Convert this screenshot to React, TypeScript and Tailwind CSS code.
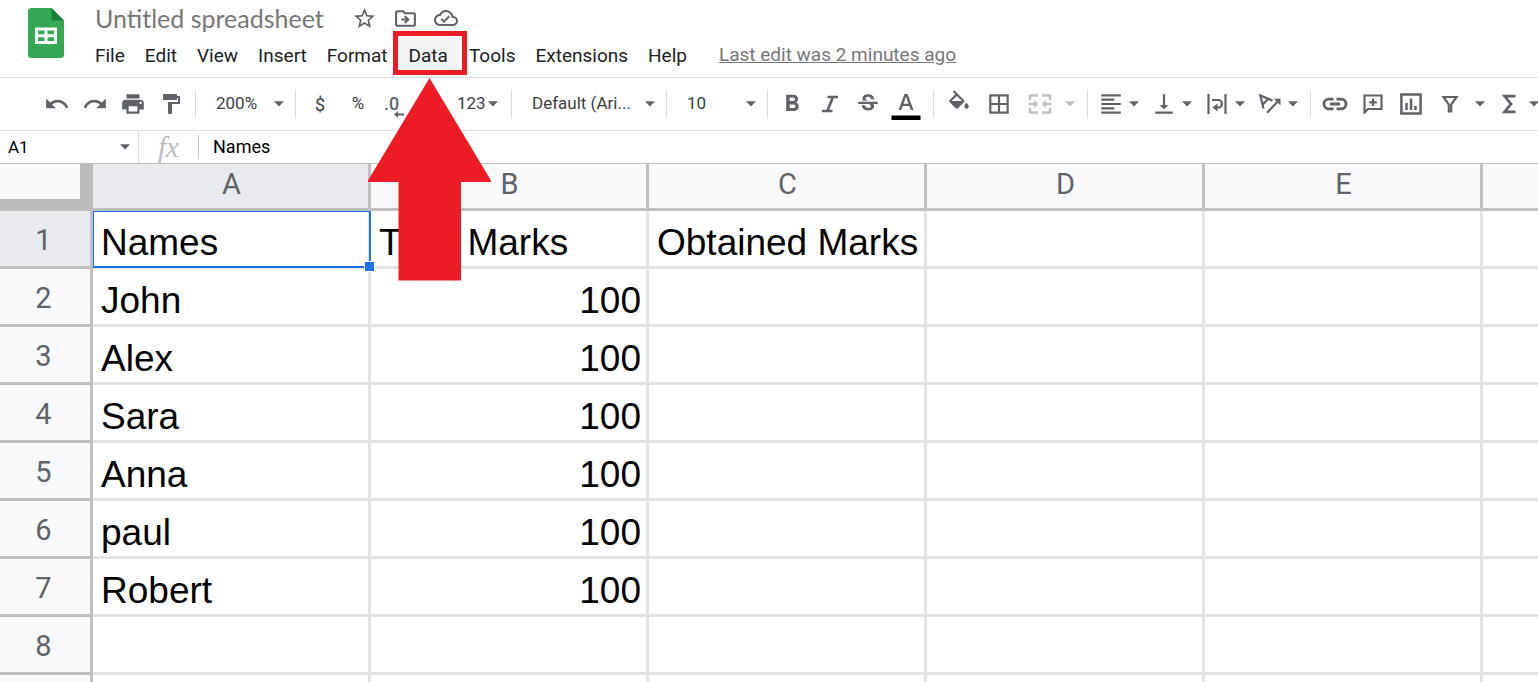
import React, { type ReactNode } from "react";
import {
  MdBorderAll,
  MdFormatAlignLeft,
  MdFormatBold,
  MdFormatPaint,
  MdOutlineCloudDone,
  MdOutlineDriveFileMove,
  MdPrint,
  MdRedo,
  MdStarBorder,
  MdStrikethroughS,
  MdUndo,
  MdVerticalAlignBottom,
} from "react-icons/md";

const menus = ["File", "Edit", "View", "Insert", "Format", "Data", "Tools", "Extensions", "Help"];
const columns = ["A", "B", "C", "D", "E", "F"];
const rows: string[][] = [
  ["Names", "Total Marks", "Obtained Marks"],
  ["John", "100"],
  ["Alex", "100"],
  ["Sara", "100"],
  ["Anna", "100"],
  ["paul", "100"],
  ["Robert", "100"],
  [],
];

function Caret({ className = "" }: { className?: string }) {
  return (
    <svg viewBox="0 0 10 6" className={`h-[6px] w-[10px] shrink-0 ${className}`} fill="currentColor" aria-hidden="true">
      <path d="M0 .3h10L5 5.600z" />
    </svg>
  );
}

function Logo() {
  return (
    <svg viewBox="0 0 36 50" className="h-[50px] w-[36px]" aria-hidden="true">
      <path d="M3.500 0H23.500L36 12.500V46.500a3.500 3.500 0 0 1-3.500 3.500h-29A3.500 3.500 0 0 1 0 46.500v-43A3.500 3.500 0 0 1 3.500 0z" fill="#34a853" />
      <path d="M23.500 0 36 12.500H23.500z" fill="#188038" />
      <path d="M7 19.500h22v16.500H7zM10 22.500v3.700h6.500v-3.700zM19.500 22.500v3.700H26v-3.700zM10 29.300V33h6.500v-3.700zM19.500 29.300V33H26v-3.700z" fill="#fff" fillRule="evenodd" />
    </svg>
  );
}

function Tool({ label, className = "w-[38px]", children }: { label: string; className?: string; children: ReactNode }) {
  return (
    <button type="button" aria-label={label} className={`flex h-9 shrink-0 items-center justify-center ${className}`}>
      {children}
    </button>
  );
}

function DropTool({ label, children }: { label: string; children: ReactNode }) {
  return (
    <button type="button" aria-label={label} className="flex h-9 w-[53px] shrink-0 items-center">
      <span className="flex w-9 justify-center">{children}</span>
      <Caret />
    </button>
  );
}

function Separator() {
  return <div className="mx-[5px] h-7 w-px shrink-0 bg-[#dadce0]" />;
}

function Picker({ label, value, className }: { label: string; value: string; className: string }) {
  return (
    <label className={`grid shrink-0 items-center ${className}`}>
      <select aria-label={label} defaultValue={value} className="col-start-1 row-start-1 w-full appearance-none bg-transparent pb-[2px] pl-[15px] text-[17px] leading-6 text-[#3c4043] outline-none">
        <option>{value}</option>
      </select>
      <Caret className="pointer-events-none col-start-1 row-start-1 mr-[6px] justify-self-end" />
    </label>
  );
}

function Header() {
  return (
    <header className="flex h-[78px] shrink-0 border-b border-[#dadce0] pl-7 pt-2">
      <Logo />
      <div className="pl-[21px]">
        <div className="flex h-[20px] items-center text-[#5f6368]">
          <input
            aria-label="Document title"
            defaultValue="Untitled spreadsheet"
            className="ml-[10px] w-[250px] bg-transparent font-[Lato,sans-serif] text-[25px] leading-8 text-[#777777] outline-none"
          />
          <div className="flex items-center gap-4 pl-[7px]">
            <button type="button" aria-label="Star"><MdStarBorder size={25} /></button>
            <button type="button" aria-label="Move"><MdOutlineDriveFileMove size={25} /></button>
            <button type="button" aria-label="See document status"><MdOutlineCloudDone size={24} /></button>
          </div>
        </div>
        <nav className="flex items-center pt-[9px] text-[19px] leading-[36px] text-[#202124]">
          {menus.map((name) =>
            name === "Data" ? (
              <div key={name} className="relative">
                <button type="button" className="block rounded-[4px] bg-[#f1f3f4] px-[11px]">{name}</button>
                <div className="pointer-events-none absolute -top-[7px] -right-2 -bottom-px -left-[5px] border-[5px] border-[#ed1c24]" />
              </div>
            ) : (
              <button type="button" key={name} className="px-[10px]">{name}</button>
            ),
          )}
          <a href="#history" className="ml-[22px] pb-[2px] whitespace-nowrap text-[#777777] underline">Last edit was 2 minutes ago</a>
        </nav>
      </div>
    </header>
  );
}

function Toolbar() {
  return (
    <div role="toolbar" aria-label="Formatting" className="flex h-[53px] shrink-0 items-center overflow-hidden border-b border-[#dadce0] pl-[38px] text-[#5f6368]">
      <Tool label="Undo"><MdUndo size={26} /></Tool>
      <Tool label="Redo"><MdRedo size={26} /></Tool>
      <Tool label="Print"><MdPrint size={26} /></Tool>
      <Tool label="Paint format"><MdFormatPaint size={24} /></Tool>
      <Separator />
      <Picker label="Zoom" value="200%" className="w-[89px]" />
      <Separator />
      <Tool label="Format as currency"><span className="text-[18px] text-[#3c4043]">$</span></Tool>
      <Tool label="Format as percent"><span className="text-[17px] text-[#3c4043]">%</span></Tool>
      <Tool label="Decrease decimal places">
        <svg viewBox="0 0 26 26" className="size-[26px] overflow-visible" fill="currentColor">
          <text x="1" y="19" fontSize="18" fontWeight="500">.0</text>
          <path d="M11 23.500 15 20v2.500h6v2h-6V27z" />
        </svg>
      </Tool>
      <Tool label="Increase decimal places" className="w-[38px] pr-[10px]"><span className="text-[14px]">.00</span></Tool>
      <button type="button" aria-label="More formats" className="flex h-9 w-[53px] shrink-0 items-center gap-[2px] pl-1">
        <span className="text-[17px] text-[#3c4043]">123</span>
        <Caret />
      </button>
      <Separator />
      <Picker label="Font" value="Default (Ari..." className="w-[144px]" />
      <Separator />
      <Picker label="Font size" value="10" className="w-[90px]" />
      <Separator />
      <div className="flex pr-[3px]">
        <Tool label="Bold"><MdFormatBold size={28} /></Tool>
        <Tool label="Italic">
          <svg viewBox="0 0 18 18" className="size-[18px]" fill="none" stroke="currentColor" strokeWidth="2.600">
            <path d="M6.500 2h10.500M1 16h10.500M12 2 6.300 16" />
          </svg>
        </Tool>
        <Tool label="Strikethrough"><MdStrikethroughS size={26} /></Tool>
        <Tool label="Text color">
          <svg viewBox="0 0 30 36" className="h-9 w-[30px]" fill="currentColor">
            <path d="M13.500 8h3l6 16h-2.700l-1.500-4h-6.600l-1.500 4H7.500zM15 10.800l-2.500 7h5z" />
            <path d="M.5 29.500h29V34H.500z" fill="#000" />
          </svg>
        </Tool>
      </div>
      <Separator />
      <Tool label="Fill color" className="w-10 pb-2">
        <svg viewBox="0 0 24 18" className="h-[20px] w-[26px]" fill="currentColor">
          <path d="M16.560 8.940 7.620 0 6.210 1.410l2.380 2.380-5.150 5.150c-.59.59-.59 1.540 0 2.120l5.500 5.500c.29.29.68.44 1.060.44s.77-.15 1.060-.44l5.500-5.500c.59-.58.59-1.530 0-2.120zM5.210 10 10 5.210 14.790 10zM19 11.500s-2 2.170-2 3.500c0 1.100.9 2 2 2s2-.9 2-2c0-1.330-2-3.500-2-3.500z" />
        </svg>
      </Tool>
      <Tool label="Borders" className="w-10"><MdBorderAll size={26} /></Tool>
      <Tool label="Merge cells" className="w-[42px] text-[#bdc1c6]">
        <svg viewBox="0 0 24 20" className="h-5 w-6" fill="none" stroke="currentColor" strokeWidth="2.400">
          <path d="M2 6V1.500h8M14 1.500h8V6M2 14v4.500h8M14 18.500h8V14M1 10h6M23 10h-6" />
          <path d="M6 6.200v7.600l4.700-3.800zM18 6.200v7.600L13.300 10z" fill="currentColor" stroke="none" />
        </svg>
      </Tool>
      <Tool label="Select merge type" className="w-[21px] pr-[3px] text-[#bdc1c6]"><Caret /></Tool>
      <Separator />
      <DropTool label="Horizontal align"><MdFormatAlignLeft size={26} /></DropTool>
      <DropTool label="Vertical align"><MdVerticalAlignBottom size={26} /></DropTool>
      <DropTool label="Text wrapping">
        <svg viewBox="0 0 20 20" className="size-5" fill="none" stroke="currentColor" strokeWidth="2.200">
          <path d="M1.500 0v20M18.500 0v20M5 6h6.200a3.800 3.800 0 0 1 0 7.600H9" />
          <path d="M10.500 9.500v8L5.500 13.600z" fill="currentColor" stroke="none" />
        </svg>
      </DropTool>
      <DropTool label="Text rotation">
        <svg viewBox="0 0 22 20" className="h-5 w-[22px]" fill="none" stroke="currentColor" strokeWidth="2.200">
          <path d="M4.500 14.500 1.300 1.500 13.500 6.500M3.700 10.500l5.800-5.800M8 18.800 19 7.200" />
          <path d="M14.800 4.800h6.700v6.700z" fill="currentColor" stroke="none" />
        </svg>
      </DropTool>
      <Separator />
      <Tool label="Insert link">
        <svg viewBox="0 0 26 14" className="h-[14px] w-[26px]" fill="none" stroke="currentColor" strokeWidth="2.800">
          <path d="M11.500 2.200H6.800a4.800 4.800 0 0 0 0 9.600h4.700M14.500 2.200h4.700a4.800 4.800 0 0 1 0 9.600h-4.700M8 7h10" />
        </svg>
      </Tool>
      <Tool label="Insert comment">
        <svg viewBox="0 0 20 20" className="size-5" fill="none" stroke="currentColor" strokeWidth="2.200">
          <path d="M1.500 1.500h17v13.500H5L1.500 18.500zM10 4.500v7.600M6.200 8.300h7.600" />
        </svg>
      </Tool>
      <Tool label="Insert chart">
        <svg viewBox="0 0 22 22" className="size-[22px]" fill="none" stroke="currentColor" strokeWidth="2.500">
          <path d="M1.400 1.400h19.200v19.200H1.400zM6.500 10v7M11 5.500V17M15.500 13v4" />
        </svg>
      </Tool>
      <Tool label="Create a filter" className="w-10">
        <svg viewBox="0 0 18 18" className="size-[18px]" fill="none" stroke="currentColor" strokeWidth="2.200">
          <path d="M2.500 2h13L10.200 9.500v7H7.800v-7z" />
        </svg>
      </Tool>
      <Tool label="Filter views" className="w-[20px]"><Caret /></Tool>
      <Tool label="Functions">
        <svg viewBox="0 0 14 20" className="h-5 w-[14px]" fill="none" stroke="currentColor" strokeWidth="2.700">
          <path d="M13.500 2.200H2.500L9 10l-6.500 7.800h11" />
        </svg>
      </Tool>
      <Tool label="More functions" className="w-[12px]"><Caret /></Tool>
    </div>
  );
}

function FormulaBar() {
  return (
    <div className="flex h-[33px] shrink-0 items-center border-b border-[#bdbdbd]">
      <div className="flex h-full w-[139px] items-center border-r border-[#dadce0] pl-2 pr-2 text-[#5f6368]">
        <input aria-label="Name box" defaultValue="A1" className="w-full min-w-0 bg-transparent pt-px text-[17px] text-black outline-none" />
        <Caret />
      </div>
      <span className="w-[59px] text-center font-['Liberation_Serif',serif] text-[29px] leading-8 text-[#bdbdbd] italic">fx</span>
      <input
        aria-label="Formula"
        defaultValue="Names"
        className="h-6 min-w-0 flex-1 border-l border-[#c8c8c8] bg-transparent pb-[2px] pl-[14px] text-[18px] text-black outline-none"
      />
    </div>
  );
}

function Grid() {
  return (
    <main className="min-h-0 flex-1 overflow-hidden">
      <table className="w-full table-fixed border-separate border-spacing-0">
        <colgroup>
          <col className="w-[93px]" />
          <col className="w-[278px]" />
          <col className="w-[278px]" />
          <col className="w-[278px]" />
          <col className="w-[278px]" />
          <col className="w-[278px]" />
          <col />
        </colgroup>
        <thead>
          <tr className="h-[47px]">
            <td className="border-r-[13px] border-b-[12px] border-[#bcbcbc] bg-[#f8f9fa] p-0" />
            {columns.map((c, i) => (
              <th
                key={c}
                scope="col"
                className={`overflow-hidden border-b-[3px] border-[#c0c0c0] p-0 pb-[5px] pl-[2px] text-[29px] leading-[38px] font-normal text-[#5f6368] ${i < 5 ? "border-r-[3px]" : ""} ${i === 0 ? "bg-[#e8eaed]" : "bg-[#f8f9fa]"}`}
              >
                {i < 5 ? c : ""}
              </th>
            ))}
          </tr>
        </thead>
        <tbody>
          {rows.map((row, r) => (
            <tr key={r} className="h-[58px]">
              <th
                scope="row"
                className={`border-r-[3px] border-b-[3px] border-[#c0c0c0] p-0 pt-[2px] pr-[3px] text-[29px] leading-[38px] font-normal text-[#5f6368] ${r === 0 ? "bg-[#e8eaed]" : "bg-[#f8f9fa]"}`}
              >
                {r + 1}
              </th>
              {columns.map((c, i) => (
                <td
                  key={c}
                  className={`border-b-[3px] border-[#e2e3e3] p-0 pt-[8px] pl-[8px] font-['Liberation_Sans',Arial,sans-serif] text-[37px] leading-[44px] whitespace-nowrap text-black ${i < 5 ? "border-r-[3px]" : ""} ${i === 1 && r > 0 ? "pr-[5px] text-right" : ""} ${r === 0 && i === 0 ? "relative z-10" : ""}`}
                >
                  {row[i]}
                  {r === 0 && i === 0 && (
                    <div className="pointer-events-none absolute top-0 -right-[3px] -bottom-[2px] left-0 border-t border-r-2 border-b-2 border-l border-[#1a73e8]">
                      <div className="absolute -right-[6px] -bottom-[6px] size-[11px] border border-white bg-[#1a73e8]" />
                    </div>
                  )}
                </td>
              ))}
            </tr>
          ))}
          <tr className="h-[58px]">
            <th className="border-r-[3px] border-[#c0c0c0] bg-[#f8f9fa]" />
            {columns.map((c, i) => (
              <td key={c} className={`border-[#e2e3e3] ${i < 5 ? "border-r-[3px]" : ""}`} />
            ))}
          </tr>
        </tbody>
      </table>
    </main>
  );
}

export default function App() {
  return (
    <div className="relative flex h-screen flex-col overflow-hidden bg-white font-[Roboto,sans-serif]">
      <Header />
      <Toolbar />
      <FormulaBar />
      <Grid />
      <svg viewBox="0 0 124 204" className="pointer-events-none absolute top-[77px] left-[368px] z-20 h-[204px] w-[124px]" aria-hidden="true">
        <path d="M61.500 1 123 103.500V105H93v98.500H30.500V105H0v-1.500z" fill="#ed1c24" />
      </svg>
    </div>
  );
}
